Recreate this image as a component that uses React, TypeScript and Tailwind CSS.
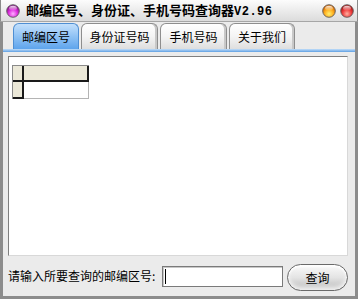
import React from "react";

function Orb({ id, c1, c2, c3 }: { id: string; c1: string; c2: string; c3: string }) {
  return (
    <svg width="14" height="14" viewBox="0 0 14 14" className="block">
      <defs>
        <radialGradient id={id} cx="50%" cy="72%" r="62%">
          <stop offset="0%" stopColor={c1} />
          <stop offset="55%" stopColor={c2} />
          <stop offset="100%" stopColor={c3} />
        </radialGradient>
        <linearGradient id={id + "h"} x1="0" y1="0" x2="0" y2="1">
          <stop offset="0%" stopColor="#ffffff" stopOpacity="0.85" />
          <stop offset="100%" stopColor="#ffffff" stopOpacity="0" />
        </linearGradient>
      </defs>
      <circle cx="7" cy="7" r="6.3" fill={`url(#${id})`} stroke="#5e5e5e" strokeWidth="0.9" />
      <ellipse cx="7" cy="4.3" rx="3.9" ry="2.5" fill={`url(#${id}h)`} />
    </svg>
  );
}

const cjk = { fontFamily: '"Noto Sans CJK SC", "Noto Sans", sans-serif' };

function Tab({ label, w, active }: { label: string; w: string; active?: boolean }) {
  return (
    <div
      className={
        "h-[26px] rounded-t-[6px] border border-b-0 flex items-center justify-center text-[12px] text-black " +
        w +
        " " +
        (active
          ? "bg-gradient-to-b from-[#c3e0fc] via-[#8fc2f4] to-[#5ea4ec] border-[#4f8fd3]"
          : "bg-gradient-to-b from-[#ffffff] via-[#f4f4f4] to-[#dedede] border-[#8e8e8e] shadow-[inset_-2px_0_0_#c8c8c8]")
      }
      style={cjk}
    >
      {label}
    </div>
  );
}

export default function App() {
  return (
    <div className="w-[358px] h-[299px] flex flex-col bg-[#ebebeb] overflow-hidden" style={cjk}>
      {/* title bar */}
      <div className="h-[22px] shrink-0 flex items-center bg-gradient-to-b from-[#fcfcfc] to-[#dcdcdc] border-l border-r border-[#8a8a8a] border-b border-b-[#a6a6a6]">
        <div className="ml-[5px]">
          <Orb id="p" c1="#ffb0ff" c2="#e030e0" c3="#8a108a" />
        </div>
        <div className="ml-[6px] text-[13px] font-bold text-black leading-none tracking-[0px] whitespace-nowrap">
          邮编区号、身份证、手机号码查询器
          <span className="text-[12px] tracking-[0.5px]" style={{ fontFamily: '"Liberation Mono", monospace' }}>
            V2.96
          </span>
        </div>
        <div className="ml-auto mr-[3px] flex gap-[4px]">
          <Orb id="o" c1="#fff070" c2="#ffb020" c3="#d86a00" />
          <Orb id="r" c1="#ffb0a0" c2="#f04040" c3="#b01010" />
        </div>
      </div>

      {/* body */}
      <div className="flex-1 flex flex-col border-l-[3px] border-r-[3px] border-b-[3px] border-[#8c8c8c]">
        {/* tabs */}
        <div className="mt-[1px] pl-[10px] flex items-end gap-[2px]">
          <Tab label="邮编区号" w="w-[66px]" active />
          <Tab label="身份证号码" w="w-[77px]" />
          <Tab label="手机号码" w="w-[67px]" />
          <Tab label="关于我们" w="w-[66px]" />
        </div>
        {/* blue line */}
        <div className="h-[3px] bg-gradient-to-b from-[#c2def9] to-[#5e9fe2]" />

        {/* panel */}
        <div className="mt-[4px] mx-[5px] mr-[7px] flex-1 bg-white border-t border-l border-[#7f7f7f] border-r border-b border-r-[#d8d8d8] border-b-[#d8d8d8] pt-[8px] pl-[3px]">
          <div className="flex flex-col w-fit border-t border-l border-[#8a8a8a]">
            <div className="flex">
              <div className="w-[11px] h-[16px] bg-[#ebe8d8] border-r-2 border-b-2 border-[#1a1a1a]" />
              <div className="w-[65px] h-[16px] bg-[#ebe8d8] border-r-2 border-b-2 border-[#1a1a1a]" />
            </div>
            <div className="flex">
              <div className="w-[11px] h-[17px] bg-[#ebe8d8] border-r-2 border-b-2 border-[#1a1a1a]" />
              <div className="w-[65px] h-[17px] bg-white border-r border-b border-[#b4b4b4]" />
            </div>
          </div>
        </div>

        {/* bottom row */}
        <div className="h-[40px] shrink-0 flex items-center pl-[5px]">
          <div className="w-[154px] text-[12px] text-black whitespace-nowrap">请输入所要查询的邮编区号:</div>
          <div className="w-[121px] h-[21px] bg-white border border-[#7a7a7a] shadow-[inset_1px_1px_0_#c8c8c8] flex items-center pl-[2px]">
            <div className="w-[1px] h-[15px] bg-black" />
          </div>
          <div className="ml-[4px] mt-[3px] w-[61px] h-[27px] rounded-full border border-[#6a6a6a] bg-gradient-to-b from-[#fafafa] via-[#e4e4e4] to-[#b8b8b8] shadow-[inset_0_-3px_4px_rgba(255,255,255,0.8),inset_0_2px_2px_rgba(255,255,255,0.9)] flex items-center justify-center text-[12px] text-black">
            查询
          </div>
        </div>
      </div>
    </div>
  );
}
